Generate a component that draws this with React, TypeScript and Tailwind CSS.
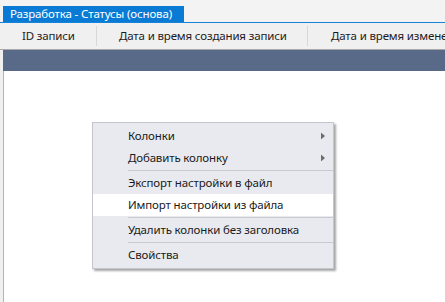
export default function App() {
  const font = {
    fontFamily: '"Noto Sans", "Open Sans", sans-serif',
    letterSpacing: "-0.15px",
  };

  const Item = ({
    label,
    sub,
    active,
  }: {
    label: string;
    sub?: boolean;
    active?: boolean;
  }) => (
    <div
      className={`relative flex h-[22px] items-center pl-[35px] pr-3 text-[11.5px] text-[#1a1a1a] ${
        active ? "bg-white" : ""
      }`}
    >
      <span className="leading-none">{label}</span>
      {sub && (
        <svg
          className="absolute right-[8px] top-1/2 -translate-y-1/2"
          width="4"
          height="7"
          viewBox="0 0 4 7"
        >
          <path d="M0 0 L4 3.5 L0 7 Z" fill="#6d6d6d" />
        </svg>
      )}
    </div>
  );

  const Sep = () => (
    <div className="flex h-[3px] items-center pl-[35px]">
      <div className="h-px w-full bg-[#c9cad0]" />
    </div>
  );

  return (
    <div
      className="relative flex h-[302px] w-[445px] flex-col overflow-hidden bg-[#f0f0f0]"
      style={font}
    >
      {/* tab strip */}
      <div className="flex h-[23px] items-end border-b border-[#1584d6] bg-[#f3f3f3]">
        <div className="ml-[3px] flex h-[16px] w-[181px] items-center bg-[#0a7bd4] pl-[7px] text-[11.5px] leading-none text-white">
          Разработка - Статусы (основа)
        </div>
      </div>

      {/* column headers */}
      <div className="flex h-[27px] items-center overflow-hidden whitespace-nowrap border-b border-[#a8a8a8] bg-[#f0f0f0] text-[11.5px] text-[#1e1a24]">
        <div className="flex h-[20px] w-[97px] shrink-0 items-center border-r border-[#d8d8d8] pl-[22px]">
          ID записи
        </div>
        <div className="flex h-[20px] w-[211px] shrink-0 items-center border-r border-[#d8d8d8] pl-[22px]">
          Дата и время создания записи
        </div>
        <div className="flex h-[20px] shrink-0 items-center pl-[23px]">
          Дата и время изменения записи
        </div>
      </div>

      {/* grid body */}
      <div className="flex flex-1 flex-col pl-[3px]">
        <div className="h-[21px] bg-[#596a89]" />
        <div className="flex-1 border-l border-[#b4b4b4] bg-white" />
      </div>

      {/* context menu */}
      <div className="absolute left-[92px] top-[122px] w-[242px] border border-[#c5c6cc] bg-[#e9eaef] py-[2px] shadow-[2px_2px_2px_rgba(0,0,0,0.35)]">
        <Item label="Колонки" sub />
        <Item label="Добавить колонку" sub />
        <Sep />
        <Item label="Экспорт настройки в файл" />
        <Item label="Импорт настройки из файла" active />
        <Sep />
        <Item label="Удалить колонки без заголовка" />
        <Sep />
        <Item label="Свойства" />
      </div>
    </div>
  );
}
